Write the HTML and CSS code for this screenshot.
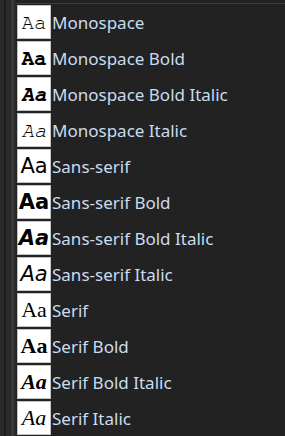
FILE: index.html
```html
<!DOCTYPE html>
<html>
<head>
<meta charset="utf-8">
<link rel="stylesheet" href="styles.css">
</head>
<body>
<div class="frame">
  <div class="gutter">
    <div class="g1"></div>
    <div class="g2"></div>
    <div class="g3"></div>
    <div class="g4"></div>
    <div class="g5"></div>
  </div>
  <div class="list">
    <div class="row"><span class="sw mono">Aa</span><span class="name">Monospace</span></div>
    <div class="row"><span class="sw mono b">Aa</span><span class="name">Monospace Bold</span></div>
    <div class="row"><span class="sw mono b i">Aa</span><span class="name">Monospace Bold Italic</span></div>
    <div class="row"><span class="sw mono i">Aa</span><span class="name">Monospace Italic</span></div>
    <div class="row"><span class="sw sans">Aa</span><span class="name">Sans-serif</span></div>
    <div class="row"><span class="sw sans b">Aa</span><span class="name">Sans-serif Bold</span></div>
    <div class="row"><span class="sw sans b i">Aa</span><span class="name">Sans-serif Bold Italic</span></div>
    <div class="row"><span class="sw sans i">Aa</span><span class="name">Sans-serif Italic</span></div>
    <div class="row"><span class="sw serif">Aa</span><span class="name">Serif</span></div>
    <div class="row"><span class="sw serif b">Aa</span><span class="name">Serif Bold</span></div>
    <div class="row"><span class="sw serif b i">Aa</span><span class="name">Serif Bold Italic</span></div>
    <div class="row"><span class="sw serif i">Aa</span><span class="name">Serif Italic</span></div>
  </div>
</div>
</body>
</html>
```
FILE: styles.css
```css
html, body {
  margin: 0;
  padding: 0;
  background: #222222;
  height: 100%;
  overflow: hidden;
}
.frame {
  display: flex;
  height: 436px;
}
.gutter {
  display: flex;
  width: 16px;
  flex: none;
}
.g1 { width: 4px; background: #2a2a2a; }
.g2 { width: 2px; background: #1c1c1c; }
.g3 { width: 5px; background: #2b2b2b; }
.g4 { width: 3px; background: #3a3a3a; }
.g5 { width: 2px; background: #2a2a2a; }
.list {
  flex: 1;
  display: flex;
  flex-direction: column;
  margin-top: 3px;
  border-top: 1px solid #3c3c3c;
  background: #222222;
}
.row {
  height: 36px;
  display: flex;
  align-items: center;
  flex: none;
}
.sw {
  box-sizing: border-box;
  width: 34px;
  height: 34px;
  margin-left: 1px;
  background: #ffffff;
  border: 1px solid #c4c4c4;
  color: #000;
  display: flex;
  align-items: center;
  justify-content: center;
  flex: none;
  line-height: 1;
}
.mono { font-family: FreeMono, "Courier New", monospace; font-size: 21px; }
.sans { font-family: "DejaVu Sans", Verdana, sans-serif; font-size: 21px; }
.serif { font-family: "Liberation Serif", "Times New Roman", serif; font-size: 22px; }
.b { font-weight: bold; }
.i { font-style: italic; }
.name {
  margin-left: 1px;
  font-family: "Noto Sans", sans-serif;
  font-size: 17px;
  color: #c9dcf0;
  white-space: nowrap;
}
```
